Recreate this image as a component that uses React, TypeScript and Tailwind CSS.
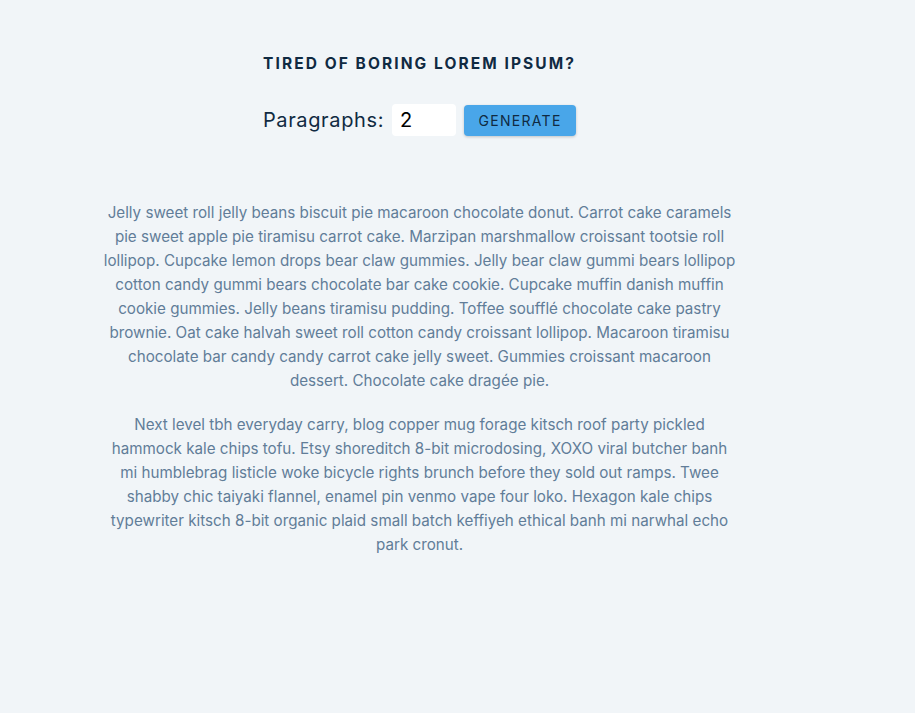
import { useState } from "react";

const paragraphs = [
  "Jelly sweet roll jelly beans biscuit pie macaroon chocolate donut. Carrot cake caramels pie sweet apple pie tiramisu carrot cake. Marzipan marshmallow croissant tootsie roll lollipop. Cupcake lemon drops bear claw gummies. Jelly bear claw gummi bears lollipop cotton candy gummi bears chocolate bar cake cookie. Cupcake muffin danish muffin cookie gummies. Jelly beans tiramisu pudding. Toffee soufflé chocolate cake pastry brownie. Oat cake halvah sweet roll cotton candy croissant lollipop. Macaroon tiramisu chocolate bar candy candy carrot cake jelly sweet. Gummies croissant macaroon dessert. Chocolate cake dragée pie.",
  "Next level tbh everyday carry, blog copper mug forage kitsch roof party pickled hammock kale chips tofu. Etsy shoreditch 8-bit microdosing, XOXO viral butcher banh mi humblebrag listicle woke bicycle rights brunch before they sold out ramps. Twee shabby chic taiyaki flannel, enamel pin venmo vape four loko. Hexagon kale chips typewriter kitsch 8-bit organic plaid small batch keffiyeh ethical banh mi narwhal echo park cronut.",
];

export default function App() {
  const [count, setCount] = useState("2");

  return (
    <main className="min-h-[713px] bg-[#f1f5f8] font-['Inter','Liberation_Sans',sans-serif]">
      <section className="w-[635px] ml-[102px] pt-[54px] text-center">
        <h3 className="uppercase font-bold text-[15.5px] leading-[20px] tracking-[0.13rem] text-[#102a42]">
          tired of boring lorem ipsum?
        </h3>
        <form
          className="flex justify-center items-center mt-[30px]"
          onSubmit={(e) => e.preventDefault()}
        >
          <label
            htmlFor="amount"
            className="text-[20px] tracking-[0.04rem] text-[#102a42]"
          >
            Paragraphs:
          </label>
          <input
            id="amount"
            type="number"
            value={count}
            onChange={(e) => setCount(e.target.value)}
            className="w-16 h-8 mx-2 px-2 rounded bg-white text-[20px] text-black outline-none [appearance:textfield]"
          />
          <button
            type="submit"
            className="w-[112px] h-[31px] rounded bg-[#49a6e9] uppercase text-[14px] tracking-[0.08rem] text-[#102a42] shadow-[0_1px_3px_rgba(0,0,0,0.2)]"
          >
            generate
          </button>
        </form>
        <article className="mt-[65px]">
          {paragraphs.map((p, i) => (
            <p key={i} className="mb-5 text-[15.2px] leading-6 text-[#617d98]">
              {p}
            </p>
          ))}
        </article>
      </section>
    </main>
  );
}
